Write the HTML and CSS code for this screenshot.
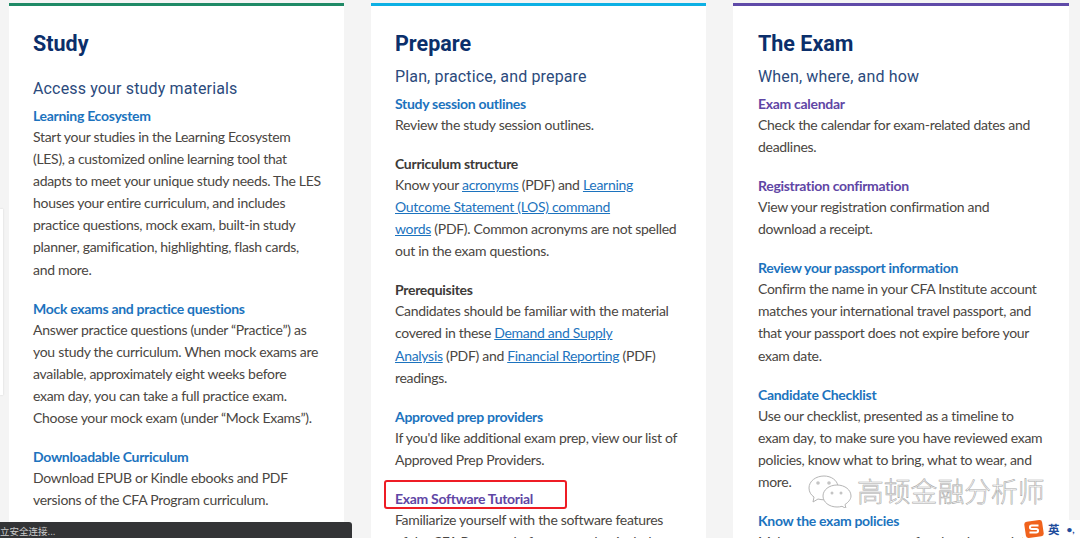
FILE: index.html
```html
<!DOCTYPE html>
<html lang="en">
<head>
<meta charset="utf-8">
<title>CFA Program</title>
<link rel="stylesheet" href="styles.css">
</head>
<body>
<div class="side-panel"></div>
<main class="columns">
  <section class="card card-green">
    <h2>Study</h2>
    <h3 class="sub-wide">Access your study materials</h3>
    <div class="item"><h4>Learning Ecosystem</h4><p>Start your studies in the Learning Ecosystem<br>(LES), a customized online learning tool that<br>adapts to meet your unique study needs. The LES<br>houses your entire curriculum, and includes<br>practice questions, mock exam, built-in study<br>planner, gamification, highlighting, flash cards,<br>and more.</p></div>
    <div class="item"><h4>Mock exams and practice questions</h4><p>Answer practice questions (under “Practice”) as<br>you study the curriculum. When mock exams are<br>available, approximately eight weeks before<br>exam day, you can take a full practice exam.<br>Choose your mock exam (under “Mock Exams”).</p></div>
    <div class="item"><h4>Downloadable Curriculum</h4><p>Download EPUB or Kindle ebooks and PDF<br>versions of the CFA Program curriculum.</p></div>
  </section>
  <section class="card card-blue">
    <h2>Prepare</h2>
    <h3>Plan, practice, and prepare</h3>
    <div class="item"><h4>Study session outlines</h4><p>Review the study session outlines.</p></div>
    <div class="item"><h4 class="dark">Curriculum structure</h4><p>Know your <a href="#">acronyms</a> (PDF) and <a href="#">Learning<br>Outcome Statement (LOS) command<br>words</a> (PDF). Common acronyms are not spelled<br>out in the exam questions.</p></div>
    <div class="item"><h4 class="dark">Prerequisites</h4><p>Candidates should be familiar with the material<br>covered in these <a href="#">Demand and Supply<br>Analysis</a> (PDF) and <a href="#">Financial Reporting</a> (PDF)<br>readings.</p></div>
    <div class="item"><h4>Approved prep providers</h4><p>If you'd like additional exam prep, view our list of<br>Approved Prep Providers.</p></div>
    <div class="item"><h4 class="purple">Exam Software Tutorial</h4><p>Familiarize yourself with the software features<br>of the CFA Program before exam day, includ</p></div>
  </section>
  <section class="card card-purple">
    <h2>The Exam</h2>
    <h3>When, where, and how</h3>
    <div class="item"><h4 class="purple">Exam calendar</h4><p>Check the calendar for exam-related dates and<br>deadlines.</p></div>
    <div class="item"><h4 class="purple">Registration confirmation</h4><p>View your registration confirmation and<br>download a receipt.</p></div>
    <div class="item"><h4>Review your passport information</h4><p>Confirm the name in your CFA Institute account<br>matches your international travel passport, and<br>that your passport does not expire before your<br>exam date.</p></div>
    <div class="item"><h4>Candidate Checklist</h4><p>Use our checklist, presented as a timeline to<br>exam day, to make sure you have reviewed exam<br>policies, know what to bring, what to wear, and<br>more.</p></div>
    <div class="item"><h4>Know the exam policies</h4><p>Make sure you are aware of and understand the CFA</p></div>
  </section>
</main>

<div class="highlight"></div>

<div class="watermark">
  <svg class="wechat" viewBox="0 0 44 34" width="44" height="34" aria-hidden="true">
    <path d="M16 2C8 2 1 7 1 14c0 4 2 7 5 9l-1 5 5-3c2 .5 4 .8 6 .8" fill="rgba(255,255,255,.75)" stroke="#b5b5b5" stroke-width="1"/>
    <path d="M16 2c7 0 13 4 14 10" fill="rgba(255,255,255,.75)" stroke="#b5b5b5" stroke-width="1"/>
    <path d="M29 11c-8 0-14 5-14 11s6 11 14 11c2 0 3-.2 5-.7l4 2.2-1-4c3-2 6-5 6-8.500 0-6-6-11-14-11z" fill="#fff" stroke="#b5b5b5" stroke-width="1"/>
    <circle cx="10" cy="9" r="1.800" fill="#c4c4c4"/><circle cx="21" cy="9" r="1.800" fill="#c4c4c4"/>
    <circle cx="24" cy="19" r="1.500" fill="#c4c4c4"/><circle cx="33" cy="19" r="1.500" fill="#c4c4c4"/>
  </svg>
  <span>高顿金融分析师</span>
</div>

<div class="ime">
  <svg class="ime-logo" viewBox="0 0 22 20" width="22" height="18" aria-hidden="true">
    <rect x="1" y="1" width="20" height="18" rx="3" fill="#f0621c" transform="rotate(-8 11 10)"/>
    <path d="M16 6H8.500a1.500 1.500 0 0 0 0 4h5a1.500 1.500 0 0 1 0 4H6" fill="none" stroke="#fff" stroke-width="2.200"/>
  </svg>
  <span class="ime-text">英</span><span class="ime-dots">•,</span>
</div>

<div class="status">立安全连接...</div>
</body>
</html>
```

FILE: styles.css
```css
* { box-sizing: border-box; }
html, body { margin: 0; height: 538px; overflow: hidden; }
body {
  position: relative;
  background: #f4f4f4;
  font-family: "Lato", "Noto Sans CJK SC", sans-serif;
  font-size: 14px;
  letter-spacing: -.3px;
  line-height: 22.1px;
  color: #4a4642;
}
.columns {
  display: grid;
  grid-template-columns: 335px 335px 336px;
  column-gap: 27px;
  padding: 3px 0 0 9px;
}
.card {
  height: 600px;
  padding: 0 10px 0 24px;
  background: #fff;
  border-top: 3.500px solid;
}
.card-green { border-color: #1f8a66; }
.card-blue { border-color: #0db0e4; }
.card-purple { border-color: #5f4aa8; padding-left: 25px; }
h2 {
  margin: 0;
  padding-top: 24px;
  font-family: "Roboto", sans-serif;
  font-size: 21.500px;
  letter-spacing: 0;
  line-height: 28px;
  font-weight: 700;
  color: #0b2f6b;
}
h3 {
  margin: 7px 0 0;
  font-family: "Roboto", sans-serif;
  font-size: 16px;
  line-height: 24px;
  font-weight: 400;
  letter-spacing: .15px;
  color: #2b4a7c;
}
h3.sub-wide { margin-top: 19px; }
.item { margin-top: 4px; margin-bottom: 16.950px; }
h4 {
  margin: 0;
  font-size: 14px;
  line-height: 21px;
  font-weight: 700;
  color: #1c73be;
}
h4.dark { color: #3d3a38; }
h4.purple { color: #5f46a5; }
.item + .item { margin-top: 0; }
p { margin: 0; }
a { color: #1c73be; text-decoration: underline; }

.side-panel {
  position: absolute;
  left: 0; top: 209px;
  width: 3px; height: 186px;
  background: #fff;
  box-shadow: 0 0 2px #ccc;
}
.highlight {
  position: absolute;
  left: 384px; top: 480px;
  width: 183px; height: 29px;
  border: 2px solid #ee1c25;
  border-radius: 3px;
}
.watermark {
  position: absolute;
  left: 808px; top: 474px;
  display: flex;
  align-items: center;
  gap: 5px;
  letter-spacing: 0;
}
.watermark span {
  font-family: "Noto Sans CJK SC", sans-serif;
  font-size: 26.800px;
  line-height: 34px;
  font-weight: 300;
  color: #fff;
  -webkit-text-stroke: .6px #aaa;
}
.ime {
  position: absolute;
  left: 1023px; top: 520px;
  width: 57px; height: 18px;
  display: flex;
  align-items: center;
  background: #fff;
  overflow: hidden;
  letter-spacing: 0;
}
.ime-logo { flex: none; }
.ime-text {
  margin-left: 3px;
  font-family: "Noto Sans CJK SC", sans-serif;
  font-size: 11.500px;
  font-weight: 700;
  color: #1f4d9c;
}
.ime-dots {
  margin-left: 7px;
  font-size: 10px;
  font-weight: 700;
  color: #1f4d9c;
}
.status {
  position: absolute;
  left: 0; top: 522px;
  width: 352px; height: 16px;
  background: #333436;
  border-top-right-radius: 3px;
  font-family: "Noto Sans CJK SC", sans-serif;
  font-size: 9.500px;
  letter-spacing: 0;
  line-height: 18px;
  color: #c9c9c9;
}
```
